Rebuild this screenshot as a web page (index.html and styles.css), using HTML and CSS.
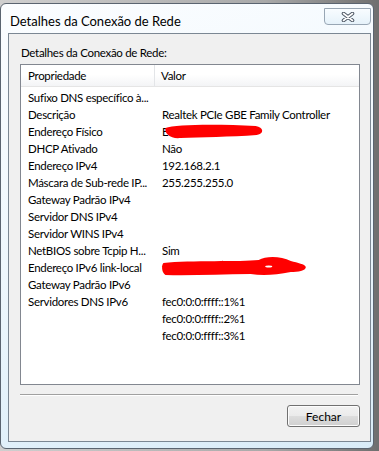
FILE: index.html
```html
<!DOCTYPE html>
<html lang="pt">
<head>
<meta charset="utf-8">
<title>Detalhes da Conexão de Rede</title>
<link rel="stylesheet" href="styles.css">
</head>
<body>
<div class="window">
  <div class="titlebar">
    <span class="title">Detalhes da Conexão de Rede</span>
    <div class="close">
      <svg width="14" height="10" viewBox="0 0 14 10">
        <path d="M2.5 1.5 L11.5 8.5 M11.5 1.5 L2.5 8.5" stroke="#4f5966" stroke-width="3.6" stroke-linecap="round"/>
        <path d="M2.5 1.5 L11.5 8.5 M11.5 1.5 L2.5 8.5" stroke="#ffffff" stroke-width="1.6" stroke-linecap="round"/>
      </svg>
    </div>
  </div>
  <div class="client">
    <div class="label">Detalhes da Conexão de Rede:</div>
    <div class="list">
      <div class="header">
        <div class="hcell c1">Propriedade</div>
        <div class="hcell c2">Valor</div>
      </div>
      <div class="rows">
        <div class="cell c1">Sufixo DNS específico à...</div><div class="cell c2"></div>
        <div class="cell c1">Descrição</div><div class="cell c2">Realtek PCIe GBE Family Controller</div>
        <div class="cell c1">Endereço Físico</div><div class="cell c2">E0-00</div>
        <div class="cell c1">DHCP Ativado</div><div class="cell c2">Não</div>
        <div class="cell c1">Endereço IPv4</div><div class="cell c2">192.168.2.1</div>
        <div class="cell c1">Máscara de Sub-rede IP...</div><div class="cell c2">255.255.255.0</div>
        <div class="cell c1">Gateway Padrão IPv4</div><div class="cell c2"></div>
        <div class="cell c1">Servidor DNS IPv4</div><div class="cell c2"></div>
        <div class="cell c1">Servidor WINS IPv4</div><div class="cell c2"></div>
        <div class="cell c1">NetBIOS sobre Tcpip H...</div><div class="cell c2">Sim</div>
        <div class="cell c1">Endereço IPv6 link-local</div><div class="cell c2">fe80::</div>
        <div class="cell c1">Gateway Padrão IPv6</div><div class="cell c2"></div>
        <div class="cell c1">Servidores DNS IPv6</div><div class="cell c2">fec0:0:0:ffff::1%1</div>
        <div class="cell c1"></div><div class="cell c2">fec0:0:0:ffff::2%1</div>
        <div class="cell c1"></div><div class="cell c2">fec0:0:0:ffff::3%1</div>
      </div>
      <svg class="redact" viewBox="21 65 337 319" preserveAspectRatio="none">
        <path fill="#ff0000" d="M165,128 C175,124 220,124 255,126 C263,127 264,134 256,135 C230,137 200,137 180,138 C170,139 164,134 165,128 Z"/>
        <path fill="#ff0000" d="M163,263 C190,260 240,262 258,260 C265,256 280,256 290,261 C297,263 304,264 305,267 C305,271 297,272 290,272 C275,275 262,276 250,274 C220,274 190,276 165,275 C161,272 161,265 163,263 Z"/>
        <ellipse cx="268" cy="266.5" rx="3.5" ry="1.1" fill="#ffffff"/>
      </svg>
    </div>
    <div class="sep"></div>
    <div class="footer">
      <button class="btn">Fechar</button>
    </div>
  </div>
</div>
</body>
</html>
```
FILE: styles.css
```css
html, body {
  margin: 0;
  padding: 0;
}
body {
  width: 379px;
  height: 451px;
  overflow: hidden;
  background: linear-gradient(to right, #cfcfcf 0%, #a9a9a9 70%, #6f6f6f 100%);
  font-family: Lato, "Liberation Sans", sans-serif;
  font-size: 11.5px;
  letter-spacing: -0.3px;
  color: #000;
}
.window {
  margin-top: 3px;
  border: 1px solid #5a6470;
  border-radius: 6px;
  background: linear-gradient(165deg, #fbfdff 0%, #eef7fd 50%, #d9ecf8 100%);
  display: flex;
  flex-direction: column;
  padding: 0 2px 6px 7px;
  box-sizing: content-box;
  width: 363px;
  height: 438px;
}
.titlebar {
  height: 29px;
  display: flex;
  justify-content: space-between;
  align-items: flex-start;
  flex: none;
}
.title {
  padding-left: 2px;
  padding-top: 9px;
  font-size: 13px;
  letter-spacing: 0;
  line-height: 16px;
}
.close {
  margin-top: 4px;
  width: 45px;
  height: 15px;
  border: 1px solid #98a6b4;
  border-radius: 0 0 4px 4px;
  background: linear-gradient(#f8fcff, #e6f2fa);
  display: flex;
  align-items: center;
  justify-content: center;
}
.client {
  flex: 1;
  border: 1px solid #7b8793;
  background: #f0f0f0;
  display: flex;
  flex-direction: column;
  padding: 11px 10px 0 11px;
}
.label {
  padding-left: 1px;
  line-height: 15px;
  height: 15px;
}
.list {
  position: relative;
  margin-top: 4px;
  height: 319px;
  border: 1px solid #828790;
  background: #fff;
}
.header {
  display: grid;
  grid-template-columns: 134px 1fr;
  height: 21px;
  background: linear-gradient(#ffffff 0%, #ffffff 45%, #f3f4f6 100%);
  border-bottom: 1px solid #e5e5e5;
}
.hcell {
  line-height: 22px;
}
.hcell.c1 {
  padding-left: 7px;
  border-right: 1px solid #e3e5e8;
}
.hcell.c2 {
  padding-left: 6px;
}
.rows {
  margin-top: 2px;
  display: grid;
  grid-template-columns: 134px 1fr;
  grid-auto-rows: 17px;
}
.cell {
  line-height: 17px;
  white-space: nowrap;
  overflow: hidden;
}
.cell.c1 {
  padding-left: 7px;
}
.cell.c2 {
  padding-left: 7px;
}
.redact {
  position: absolute;
  left: 0;
  top: 0;
  width: 100%;
  height: 100%;
  pointer-events: none;
}
.sep {
  margin-top: 9px;
  height: 1px;
  margin-right: 2px;
  background: #a0a0a0;
  border-bottom: 1px solid #ffffff;
}
.footer {
  display: flex;
  justify-content: flex-end;
  margin-top: 9px;
}
.btn {
  width: 73px;
  height: 22px;
  border: 1px solid #707070;
  border-radius: 3px;
  background: linear-gradient(#f2f2f2 0%, #ebebeb 48%, #dddddd 52%, #cfcfcf 100%);
  font-family: Lato, "Liberation Sans", sans-serif;
  font-size: 12px;
  color: #000;
  padding: 0;
  box-shadow: inset 0 0 0 1px #fcfcfc;
}
```
